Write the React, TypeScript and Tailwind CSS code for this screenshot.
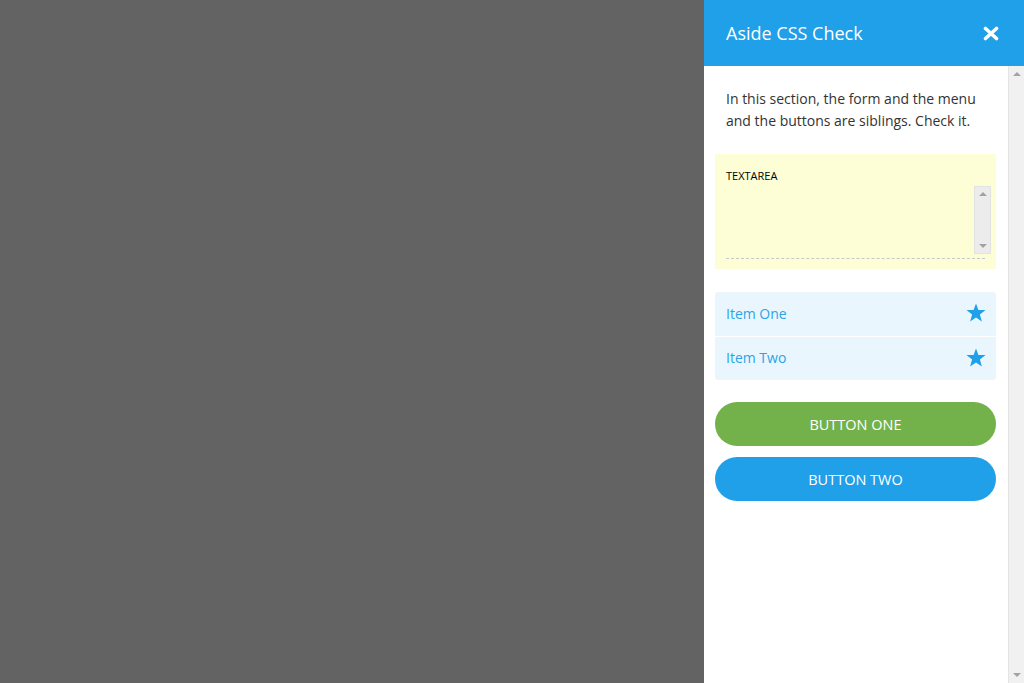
import React from 'react';

const items = ['Item One', 'Item Two'];

function CloseIcon() {
  return (
    <svg width="16" height="15" viewBox="0 0 16 15" aria-hidden="true">
      <path
        d="M2.5 2.5 L13.5 12.5 M13.5 2.5 L2.5 12.5"
        stroke="#ffffff"
        strokeWidth="3.6"
        strokeLinecap="round"
        fill="none" />
    </svg>);
}

function StarIcon() {
  return (
    <svg width="20" height="19" viewBox="0 0 20 19" aria-hidden="true" className="-mt-[3px] -mr-[1px]">
      <polygon
        points="10,0.5 12.4,6.9 19.5,7.1 13.9,11.5 15.9,18.5 10,14.4 4.1,18.5 6.1,11.5 0.5,7.1 7.6,6.9"
        fill="#1fa0e8" />
    </svg>);
}

// classic scrollbar arrows
const ArrowUp = () =>
<span className="h-0 w-0 border-x-[4px] border-b-[4px] border-x-transparent border-b-[#a3a3a3]" />;
const ArrowDown = () =>
<span className="h-0 w-0 border-x-[4px] border-t-[4px] border-x-transparent border-t-[#a3a3a3]" />;

export default function App() {
  return (
    <div className="flex h-[683px] w-full overflow-hidden font-['Open_Sans',sans-serif]">
      {/* Backdrop */}
      <div className="flex-1 bg-[#636363]" />

      {/* Aside */}
      <aside className="flex w-[320px] flex-col bg-white">
        <header className="flex h-[66px] shrink-0 items-center justify-between bg-[#1fa0e8] pl-[22px] pr-[25px]">
          <h1 className="text-[18px] font-normal text-white">Aside CSS Check</h1>
          <button type="button" className="flex items-center justify-center">
            <CloseIcon />
          </button>
        </header>

        <div className="flex min-h-0 flex-1">
          <div className="flex-1 overflow-hidden pl-[11px] pr-[12px] pt-[22px]">
            <p className="px-[11px] text-[14px] leading-[22px] text-[#333333]">
              In this section, the form and the menu and the buttons are siblings. Check it.
            </p>

            {/* Form */}
            <form className="mt-[22px] bg-[#fdfed6] pb-[10px] pl-[11px] pr-[5px] pt-[14px]">
              <label className="block text-[11px] leading-[16px] text-black">TEXTAREA</label>
              <div className="mt-[2px] flex h-[68px]">
                <textarea className="h-full flex-1 resize-none overflow-hidden bg-transparent text-[12px] outline-none" />
                <div className="flex w-[17px] flex-col items-center justify-between border border-[#e2e2e2] bg-[#ececec] py-[5px]">
                  <ArrowUp />
                  <ArrowDown />
                </div>
              </div>
              <div className="mr-[6px] mt-[4px] border-b border-dashed border-[#c8c8c8]" />
            </form>

            {/* Menu */}
            <ul className="mt-[23px] overflow-hidden rounded-[3px] bg-[#eaf6fd]">
              {items.map((item, i) =>
              <li
                key={item}
                className={`flex h-[44px] items-center justify-between pl-[11px] pr-[11px] ${i > 0 ? 'border-t border-white' : ''}`}>
                  <span className="-mt-[2px] text-[14px] text-[#2aa4e9]">{item}</span>
                  <StarIcon />
                </li>
              )}
            </ul>

            {/* Buttons */}
            <div className="mt-[22px] flex flex-col gap-[11px]">
              <button
                type="button"
                className="h-[44px] w-full rounded-full bg-[#73b14a] pt-[2px] text-[14.5px] uppercase text-white">
                Button One
              </button>
              <button
                type="button"
                className="h-[44px] w-full rounded-full bg-[#1fa0e8] pt-[2px] text-[14.5px] uppercase text-white">
                Button Two
              </button>
            </div>
          </div>

          {/* Scrollbar */}
          <div className="flex w-[16px] flex-col items-center justify-between border-l border-[#e4e4e4] bg-[#f1f1f1] py-[6px]">
            <ArrowUp />
            <ArrowDown />
          </div>
        </div>
      </aside>
    </div>);
}
